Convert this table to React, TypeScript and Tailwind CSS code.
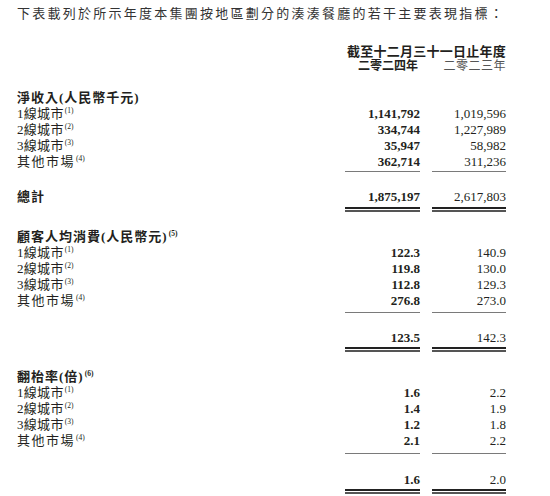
import React from "react";

type Row = { label: string; sup?: string; a: string; b: string; wide?: boolean };

const Sup = ({ n }: { n: string }) => (
  <sup className="text-[7.5px] relative -top-[5px] ml-[1px] tracking-normal">({n})</sup>
);

const SingleLine = () => (
  <>
    <div />
    <div className="border-t border-solid border-[#7a7a7a]" />
    <div className="border-t border-solid border-[#7a7a7a]" />
  </>
);

const DoubleLine = () => (
  <>
    <div />
    <div className="h-[5px] border-t-2 border-b-2 border-solid border-t-[#222] border-b-[#555]" />
    <div className="h-[5px] border-t-2 border-b-2 border-solid border-t-[#222] border-b-[#555]" />
  </>
);

const DataRows = ({ rows }: { rows: Row[] }) => (
  <>
    {rows.map((r) => (
      <React.Fragment key={r.label}>
        <div
          className={
            r.wide
              ? "h-4 leading-4 tracking-[1.5px] whitespace-nowrap"
              : "h-4 leading-4 tracking-[0.3px] whitespace-nowrap"
          }
        >
          {r.label}
          {r.sup && <Sup n={r.sup} />}
        </div>
        <div className="h-4 leading-4 text-right font-bold">{r.a}</div>
        <div className="h-4 leading-4 text-right">{r.b}</div>
      </React.Fragment>
    ))}
  </>
);

const Heading = ({ text, sup }: { text: string; sup?: string }) => (
  <>
    <div className="h-4 leading-4 font-bold tracking-[1px] whitespace-nowrap">
      {text}
      {sup && <Sup n={sup} />}
    </div>
    <div />
    <div />
  </>
);

const Gap = ({ h }: { h: string }) => <div className={`col-span-3 ${h}`} />;

export default function App() {
  const revenue: Row[] = [
    { label: "1線城市", sup: "1", a: "1,141,792", b: "1,019,596" },
    { label: "2線城市", sup: "2", a: "334,744", b: "1,227,989" },
    { label: "3線城市", sup: "3", a: "35,947", b: "58,982" },
    { label: "其他市場", sup: "4", a: "362,714", b: "311,236", wide: true },
  ];
  const spend: Row[] = [
    { label: "1線城市", sup: "1", a: "122.3", b: "140.9" },
    { label: "2線城市", sup: "2", a: "119.8", b: "130.0" },
    { label: "3線城市", sup: "3", a: "112.8", b: "129.3" },
    { label: "其他市場", sup: "4", a: "276.8", b: "273.0", wide: true },
  ];
  const turnover: Row[] = [
    { label: "1線城市", sup: "1", a: "1.6", b: "2.2" },
    { label: "2線城市", sup: "2", a: "1.4", b: "1.9" },
    { label: "3線城市", sup: "3", a: "1.2", b: "1.8" },
    { label: "其他市場", sup: "4", a: "2.1", b: "2.2", wide: true },
  ];

  return (
    <div className="w-[550px] h-[496px] bg-white text-[#231f20] text-[13px] font-['Liberation_Serif','Noto_Sans_CJK_TC',serif] pl-[17px] pr-[44px] pt-[6px] overflow-hidden">
      <div className="h-4 leading-4 tracking-[2.25px] whitespace-nowrap text-[#333]">
        下表載列於所示年度本集團按地區劃分的湊湊餐廳的若干主要表現指標：
      </div>
      <div className="grid grid-cols-[1fr_75px_74px] gap-x-3 mt-[22px]">
        <div className="col-span-3 text-right font-bold leading-[15px] tracking-[0.25px] whitespace-nowrap">
          截至十二月三十一日止年度
        </div>
        <div />
        <div className="text-right font-bold text-[12px] leading-[15px] pr-[2px] whitespace-nowrap">二零二四年</div>
        <div className="text-right text-[12px] leading-[15px] tracking-[0.5px] text-[#555] whitespace-nowrap">二零二三年</div>

        <Gap h="h-[16px]" />
        <Heading text="淨收入(人民幣千元)" />
        <DataRows rows={revenue} />
        <Gap h="h-[1px]" />
        <SingleLine />
        <Gap h="h-[17px]" />
        <div className="h-4 leading-4 font-bold tracking-[1px]">總計</div>
        <div className="h-4 leading-4 text-right font-bold">1,875,197</div>
        <div className="h-4 leading-4 text-right">2,617,803</div>
        <Gap h="h-[2px]" />
        <DoubleLine />

        <Gap h="h-[17px]" />
        <Heading text="顧客人均消費(人民幣元)" sup="5" />
        <DataRows rows={spend} />
        <Gap h="h-[3px]" />
        <SingleLine />
        <Gap h="h-[17px]" />
        <div />
        <div className="h-4 leading-4 text-right font-bold">123.5</div>
        <div className="h-4 leading-4 text-right">142.3</div>
        <Gap h="h-[1px]" />
        <DoubleLine />

        <Gap h="h-[17px]" />
        <Heading text="翻枱率(倍)" sup="6" />
        <DataRows rows={turnover} />
        <Gap h="h-[4px]" />
        <SingleLine />
        <Gap h="h-[18px]" />
        <div />
        <div className="h-4 leading-4 text-right font-bold">1.6</div>
        <div className="h-4 leading-4 text-right">2.0</div>
        <Gap h="h-[1px]" />
        <DoubleLine />
      </div>
    </div>
  );
}
